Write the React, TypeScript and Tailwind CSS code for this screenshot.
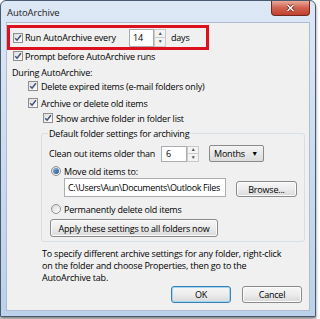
import React from 'react'

function Check() {
  return (
    <span className="inline-flex w-[10px] h-[10px] shrink-0 items-center justify-center border border-[#8f8f8f] bg-gradient-to-br from-[#dcdcdc] to-[#ffffff]">
      <svg width="8" height="8" viewBox="0 0 8 8">
        <path d="M1.2 4.2 L3.1 6.2 L6.9 1.2" fill="none" stroke="#3f5479" strokeWidth="1.5" />
      </svg>
    </span>
  )
}

function Radio({ on }: { on?: boolean }) {
  return (
    <span className="inline-flex w-[10px] h-[10px] shrink-0 items-center justify-center rounded-full border border-[#8f8f8f] bg-gradient-to-br from-[#d8d8d8] to-[#ffffff]">
      {on && <span className="w-[6px] h-[6px] rounded-full bg-gradient-to-br from-[#8fb7e4] to-[#1f4e8c]" />}
    </span>
  )
}

function Spin() {
  return (
    <span className="flex flex-col w-[12px] h-full">
      <span className="flex-1 flex items-center justify-center border border-[#c9c9c9] bg-[#f3f3f3] text-[5px] leading-none text-[#555]">▲</span>
      <span className="flex-1 flex items-center justify-center border border-t-0 border-[#c9c9c9] bg-[#f3f3f3] text-[5px] leading-none text-[#555]">▼</span>
    </span>
  )
}

function Btn({ children, w, primary }: { children: React.ReactNode; w: string; primary?: boolean }) {
  return (
    <span
      className={
        'flex h-full items-center justify-center whitespace-nowrap rounded-[3px] border bg-gradient-to-b from-[#f6f6f6] via-[#ececec] to-[#d9d9d9] ' +
        w +
        (primary ? ' border-[#3c7fb1] shadow-[inset_0_0_0_1px_#9fd5f5]' : ' border-[#8a8a8a] shadow-[inset_0_0_0_1px_#fcfcfc]')
      }
    >
      {children}
    </span>
  )
}

export default function App() {
  return (
    <div className="w-[320px] h-[319px] bg-white overflow-hidden text-[9px] tracking-[-0.2px] leading-none text-black whitespace-nowrap" style={{ fontFamily: '"Open Sans", "Noto Sans", sans-serif' }}>
      <div className="w-[316px] h-[317px] flex flex-col rounded-t-[6px] border border-[#4a5a6e] bg-gradient-to-b from-[#dde8f6] via-[#cbdcf0] to-[#bcd1ea] px-[5px] pb-[5px] shadow-[0_2px_3px_rgba(0,0,0,0.5)]">
        <div className="h-[21px] shrink-0 flex items-start justify-between">
          <span className="pl-[1px] pt-[7px] text-[9.5px] tracking-[-0.1px] text-[#1b1b1b]">AutoArchive</span>
          <span className="w-[39px] h-[15px] flex items-center justify-center rounded-b-[4px] border border-t-0 border-[#6e2a20] bg-gradient-to-b from-[#e9a999] via-[#d0604e] to-[#c2402d]">
            <svg width="9" height="8" viewBox="0 0 9 8">
              <path d="M1.5 1 L7.5 7 M7.5 1 L1.5 7" stroke="#5a1a12" strokeWidth="2.6" />
              <path d="M1.5 1 L7.5 7 M7.5 1 L1.5 7" stroke="#ffffff" strokeWidth="1.5" />
            </svg>
          </span>
        </div>
        <div className="flex-1 flex flex-col bg-[#f0f0f0] border border-[#aebdd0]">
          <div className="mt-[2px] w-[202px] h-[25px] flex items-center border-[3px] border-[#dd1020] pl-[3px]">
            <Check />
            <span className="ml-[2px] w-[104px]">Run AutoArchive every</span>
            <span className="flex h-[18px]">
              <span className="w-[25px] flex items-center pl-[3px] bg-white border border-[#abadb3]">14</span>
              <Spin />
            </span>
            <span className="ml-[5px]">days</span>
          </div>
          <div className="h-[12px] flex items-center pl-[6px]">
            <Check />
            <span className="ml-[2px]">Prompt before AutoArchive runs</span>
          </div>
          <div className="mt-[3px] h-[14px] flex items-center pl-[5px]">During AutoArchive:</div>
          <div className="h-[14px] flex items-center pl-[21px]">
            <Check />
            <span className="ml-[3px]">Delete expired items (e-mail folders only)</span>
          </div>
          <div className="mt-[3px] h-[14px] flex items-center pl-[21px]">
            <Check />
            <span className="ml-[3px]">Archive or delete old items</span>
          </div>
          <div className="mt-[1px] h-[14px] flex items-center pl-[36px]">
            <Check />
            <span className="ml-[3px]">Show archive folder in folder list</span>
          </div>
          <fieldset className="mt-[1px] ml-[34px] w-[263px] border border-[#d5dfe5] rounded-[3px] px-[7px] pb-[4px]">
            <legend className="-ml-[1px] px-[1px] h-[14px] flex items-center">Default folder settings for archiving</legend>
            <div className="mt-[5px] h-[17px] flex items-center">
              <span className="w-[112px]">Clean out items older than</span>
              <span className="flex h-[16px]">
                <span className="w-[26px] flex items-center pl-[4px] bg-white border border-[#abadb3]">6</span>
                <Spin />
              </span>
              <span className="ml-[10px] w-[55px] h-[17px] flex items-center justify-between pl-[4px] pr-[5px] rounded-[2px] border border-[#8a8a8a] bg-gradient-to-b from-[#f4f4f4] to-[#dcdcdc]">
                <span>Months</span>
                <span className="text-[7px]">▼</span>
              </span>
            </div>
            <div className="mt-[2px] h-[14px] flex items-center pl-[2px]">
              <Radio on />
              <span className="ml-[3px]">Move old items to:</span>
            </div>
            <div className="h-[19px] flex items-center pl-[15px]">
              <span className="w-[162px] h-[19px] flex items-center pl-[3px] bg-white border border-[#abadb3] overflow-hidden tracking-[-0.35px]">C:\Users\Aun\Documents\Outlook Files</span>
              <span className="ml-[10px] mt-[3px] h-[16px]">
                <Btn w="w-[61px]">Browse...</Btn>
              </span>
            </div>
            <div className="mt-[5px] h-[14px] flex items-center pl-[2px]">
              <Radio />
              <span className="ml-[3px]">Permanently delete old items</span>
            </div>
            <div className="mt-[3px] ml-[1px] h-[18px]">
              <Btn w="w-[168px]">Apply these settings to all folders now</Btn>
            </div>
          </fieldset>
          <p className="mt-[6px] ml-[35px] leading-[12px]">
            To specify different archive settings for any folder, right-click
            <br />
            on the folder and choose Properties, then go to the
            <br />
            AutoArchive tab.
          </p>
          <div className="mt-[2px] h-[17px] flex justify-end gap-[11px] pr-[7px]">
            <Btn w="w-[60px]" primary>OK</Btn>
            <Btn w="w-[60px]">Cancel</Btn>
          </div>
        </div>
      </div>
    </div>
  )
}
